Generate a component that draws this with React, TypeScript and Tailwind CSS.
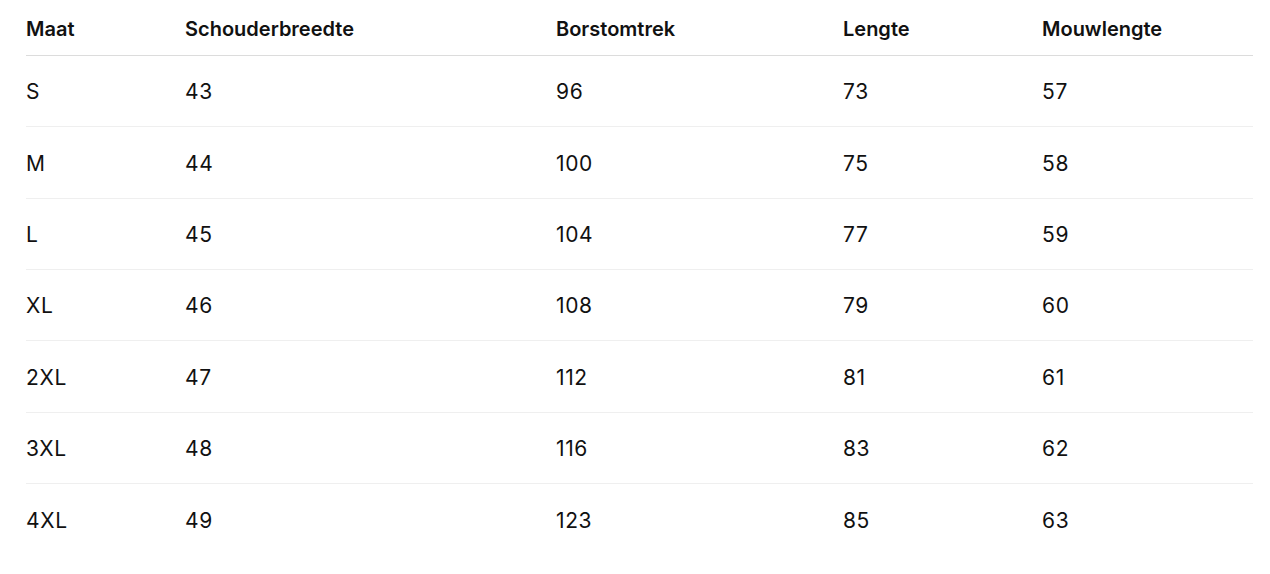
const HEADERS = ['Maat', 'Schouderbreedte', 'Borstomtrek', 'Lengte', 'Mouwlengte'];

const ROWS = [
    ['S', '43', '96', '73', '57'],
    ['M', '44', '100', '75', '58'],
    ['L', '45', '104', '77', '59'],
    ['XL', '46', '108', '79', '60'],
    ['2XL', '47', '112', '81', '61'],
    ['3XL', '48', '116', '83', '62'],
    ['4XL', '49', '123', '85', '63'],
];

const cols = 'grid grid-cols-[159px_371px_287px_199px_1fr] items-center';

export default function App() {
    return (
        <div className="min-h-[574px] bg-white pl-[26px] pr-[17px] pt-[3px] font-['Inter',sans-serif] text-[#111]">
            {/* Header */}
            <div className={`${cols} h-[53px] border-b border-[#dcdcdc] text-[20px] font-semibold`}>
                {HEADERS.map((h) => (
                    <div key={h}>{h}</div>
                ))}
            </div>

            {/* Body */}
            {ROWS.map((row, i) => (
                <div
                    key={row[0]}
                    className={`${cols} h-[71.33px] pt-[2px] text-[21px] tracking-[0.03em] ${i < ROWS.length - 1 ? 'border-b border-[#efefef]' : ''}`}
                >
                    {row.map((cell, j) => (
                        <div key={j}>{cell}</div>
                    ))}
                </div>
            ))}
        </div>
    );
}
